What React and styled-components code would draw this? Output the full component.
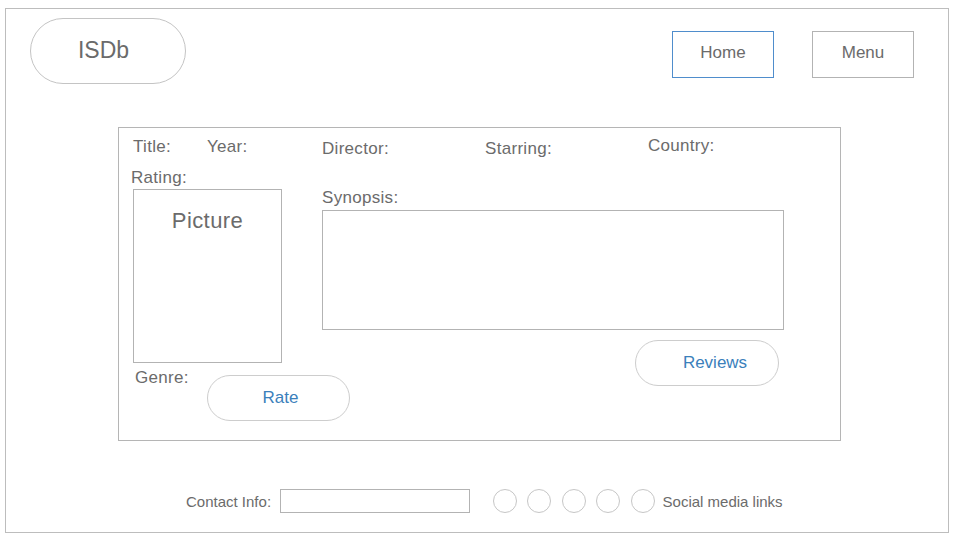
import React from "react";
import styled, { createGlobalStyle } from "styled-components";

const Global = createGlobalStyle`
  html, body { margin: 0; padding: 0; background: #fff; }
  body { font-family: "Liberation Sans", Arial, Helvetica, sans-serif; color: #6b6b6b; }
  * { box-sizing: border-box; }
`;

const Frame = styled.div`
  margin: 8px 0 0 5px;
  width: 944px;
  height: 525px;
  border: 1px solid #bdbdbd;
  display: flex;
  flex-direction: column;
`;

const Header = styled.header`
  display: flex;
  justify-content: space-between;
  align-items: flex-start;
  padding: 9px 34px 0 24px;
`;

const Logo = styled.div`
  width: 156px;
  height: 66px;
  border: 1px solid #c4c4c4;
  border-radius: 33px;
  display: flex;
  align-items: center;
  justify-content: center;
  padding: 0 9px 2px 0;
  font-size: 23px;
  color: #6b6b6b;
`;

const Nav = styled.nav`
  display: flex;
  gap: 38px;
  margin-top: 13px;
`;

const NavButton = styled.div`
  width: 102px;
  height: 47px;
  border: 1px solid ${(p) => (p.$active ? "#4f8dcc" : "#b3b3b3")};
  display: flex;
  align-items: center;
  justify-content: center;
  padding-bottom: 4px;
  font-size: 17px;
  color: #6b6b6b;
`;

const Card = styled.section`
  margin: 43px 0 0 112px;
  width: 723px;
  height: 314px;
  border: 1px solid #b5b5b5;
  display: flex;
  flex-direction: column;
`;

const TopRow = styled.div`
  display: grid;
  grid-template-columns: 74px 115px 163px 163px auto;
  align-items: start;
  padding: 10px 0 0 14px;
`;

const Label = styled.span`
  display: block;
  font-size: 17px;
  letter-spacing: 0.3px;
  line-height: 18px;
  white-space: nowrap;
  color: #6b6b6b;
  margin-top: ${(p) => p.$dy || 0}px;
  margin-left: ${(p) => p.$dx || 0}px;
`;

const Body = styled.div`
  display: flex;
  margin-top: 10px;
  padding-left: 12px;
`;

const LeftCol = styled.div`
  width: 191px;
  flex-shrink: 0;
  display: flex;
  flex-direction: column;
`;

const PictureBox = styled.div`
  width: 149px;
  height: 174px;
  margin: 2px 0 0 2px;
  border: 1px solid #b3b3b3;
  padding-top: 19px;
  text-align: center;
  font-size: 22px;
  letter-spacing: 0.4px;
  line-height: 24px;
  color: #6b6b6b;
`;

const GenreRow = styled.div`
  display: flex;
  align-items: flex-start;
  margin-top: 6px;
  padding-left: 4px;
`;

const GenreLabel = styled(Label)`
  width: 72px;
  flex-shrink: 0;
`;

const Pill = styled.div`
  flex-shrink: 0;
  width: ${(p) => p.$w}px;
  height: 46px;
  border: 1px solid #cdcdcd;
  border-radius: 23px;
  display: flex;
  align-items: center;
  justify-content: center;
  padding-left: ${(p) => p.$pl || 0}px;
  font-size: 17px;
  color: #3b80bb;
  margin-top: ${(p) => p.$mt || 0}px;
`;

const RightCol = styled.div`
  display: flex;
  flex-direction: column;
  margin-top: 21px;
  width: 462px;
`;

const SynopsisBox = styled.div`
  width: 462px;
  height: 120px;
  margin-top: 3px;
  border: 1px solid #b3b3b3;
`;

const ReviewsPill = styled(Pill)`
  align-self: flex-end;
  margin-right: 5px;
`;

const Footer = styled.footer`
  margin-top: auto;
  display: flex;
  align-items: center;
  padding: 0 0 19px 180px;
`;

const FooterLabel = styled.span`
  font-size: 15px;
  line-height: 17px;
  color: #6b6b6b;
  white-space: nowrap;
  width: ${(p) => (p.$w ? `${p.$w}px` : "auto")};
`;

const ContactInput = styled.div`
  width: 190px;
  height: 24px;
  border: 1px solid #b3b3b3;
  margin-right: 23px;
`;

const Circles = styled.div`
  display: flex;
  gap: 10.4px;
  margin-right: 8px;
`;

const Circle = styled.span`
  display: block;
  width: 24px;
  height: 24px;
  border-radius: 50%;
  border: 1px solid #c6c6c6;
`;

export default function App() {
  return (
    <>
      <Global />
      <Frame>
        <Header>
          <Logo>ISDb</Logo>
          <Nav>
            <NavButton $active>Home</NavButton>
            <NavButton>Menu</NavButton>
          </Nav>
        </Header>
        <Card>
          <TopRow>
            <Label>Title:</Label>
            <Label>Year:</Label>
            <Label $dy={2}>Director:</Label>
            <Label $dy={2}>Starring:</Label>
            <Label $dy={-1}>Country:</Label>
          </TopRow>
          <Body>
            <LeftCol>
              <Label $dy={1}>Rating:</Label>
              <PictureBox>Picture</PictureBox>
              <GenreRow>
                <GenreLabel>Genre:</GenreLabel>
                <Pill $w={143} $mt={6} $pl={4}>Rate</Pill>
              </GenreRow>
            </LeftCol>
            <RightCol>
              <Label>Synopsis:</Label>
              <SynopsisBox />
              <ReviewsPill $w={144} $mt={10} $pl={16}>Reviews</ReviewsPill>
            </RightCol>
          </Body>
        </Card>
        <Footer>
          <FooterLabel $w={94}>Contact Info:</FooterLabel>
          <ContactInput />
          <Circles>
            {[0, 1, 2, 3, 4].map((i) => (
              <Circle key={i} />
            ))}
          </Circles>
          <FooterLabel>Social media links</FooterLabel>
        </Footer>
      </Frame>
    </>
  );
}
